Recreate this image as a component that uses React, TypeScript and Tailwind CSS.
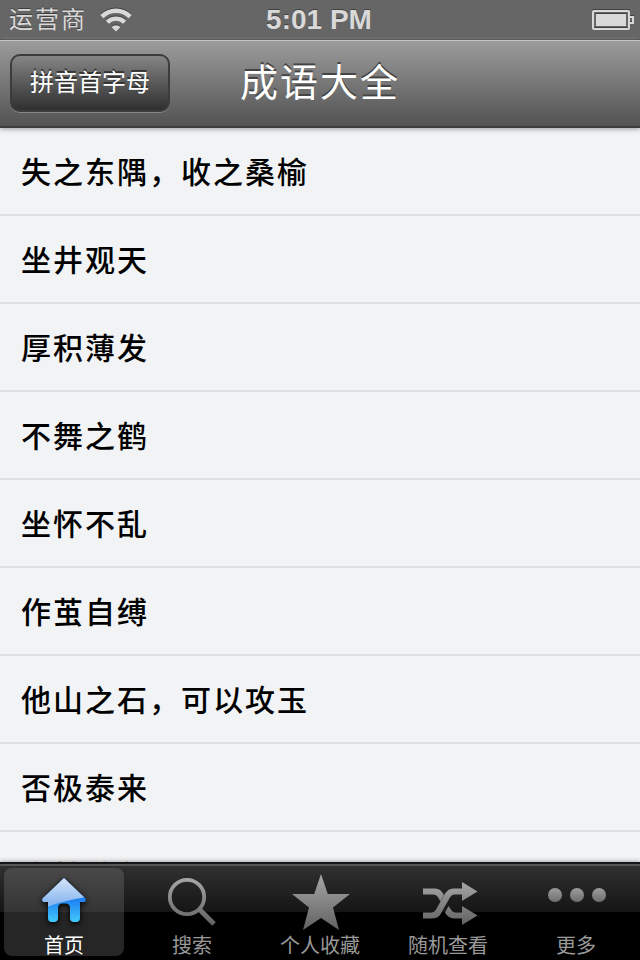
import type { ReactNode } from 'react';

const idioms = [
  '失之东隅，收之桑榆',
  '坐井观天',
  '厚积薄发',
  '不舞之鹤',
  '坐怀不乱',
  '作茧自缚',
  '他山之石，可以攻玉',
  '否极泰来',
  '守株待兔',
];

function WifiIcon() {
  return (
    <svg width="32" height="24" viewBox="0 0 32 24" fill="none" stroke="#d9d9d9" className="drop-shadow-[0_-1px_0_#404040]">
      <path d="M1.8 8.6 A20 20 0 0 1 30.2 8.6" strokeWidth="4.6" />
      <path d="M7.4 14.2 A12.2 12.2 0 0 1 24.600 14.2" strokeWidth="4.4" />
      <path d="M16 23.5 L11.5 19 A6.5 6.5 0 0 1 20.5 19 Z" fill="#d9d9d9" stroke="none" />
    </svg>
  );
}

function BatteryIcon() {
  return (
    <svg width="42" height="21" viewBox="0 0 42 21" fill="none" className="drop-shadow-[0_-1px_0_#404040]">
      <rect x="1" y="1" width="36" height="18" rx="1" stroke="#d9d9d9" strokeWidth="2" />
      <rect x="4" y="4" width="30" height="12" fill="#d9d9d9" />
      <path d="M38 7h3v6h-3" stroke="#d9d9d9" strokeWidth="2" />
    </svg>
  );
}

function GrayGradient({ id, y1, y2 }: { id: string; y1: number; y2: number }) {
  return (
    <linearGradient id={id} gradientUnits="userSpaceOnUse" x1="0" x2="0" y1={y1} y2={y2}>
      <stop offset="0" stopColor="#a6a6a6" />
      <stop offset="1" stopColor="#626262" />
    </linearGradient>
  );
}

function HomeIcon() {
  return (
    <svg width="120" height="68" viewBox="0 0 120 68" className="drop-shadow-[0_2px_3px_#000]">
      <defs>
        <linearGradient id="home" x1="0" x2="0" y1="0" y2="1">
          <stop offset="0" stopColor="#1468ee" />
          <stop offset="0.5" stopColor="#1f82f2" />
          <stop offset="1" stopColor="#45d0fc" />
        </linearGradient>
        <linearGradient id="homeShine" x1="0" x2="0" y1="0" y2="1">
          <stop offset="0" stopColor="#dce8fa" />
          <stop offset="1" stopColor="#7fb0ee" />
        </linearGradient>
        <clipPath id="homeShape">
          <path d="M60 10 L81.5 30.5 Q82.5 34 79 34 H76 V50 Q76 54 72 54 H70 Q66 54 66 50 V39 Q65 35.5 62 35.5 H58 Q55 35.5 54 39 V50 Q54 54 50 54 H48 Q44 54 44 50 V34 H41 Q37.5 34 38.5 30.5 Z" />
        </clipPath>
      </defs>
      <g clipPath="url(#homeShape)">
        <rect x="36" y="8" width="50" height="48" fill="url(#home)" />
        <path d="M36 8 H86 V28.5 Q62 32 43 39 H36 Z" fill="url(#homeShine)" />
      </g>
    </svg>
  );
}

function SearchIcon() {
  return (
    <svg width="120" height="68" viewBox="0 0 120 68" fill="none" stroke="url(#search)">
      <defs>
        <GrayGradient id="search" y1={10} y2={57} />
      </defs>
      <circle cx="55" cy="29" r="17.2" strokeWidth="3.8" />
      <path d="M67.5 41.500 L82 56" strokeWidth="5" />
    </svg>
  );
}

function StarIcon() {
  return (
    <svg width="120" height="68" viewBox="0 0 120 68" fill="url(#star)">
      <defs>
        <GrayGradient id="star" y1={6} y2={62} />
      </defs>
      <path d="M61 6 L67.8 26 H90 L73 39.5 L79 62 L61 50 L43 62 L49 39.5 L32 26 H54.2 Z" />
    </svg>
  );
}

function ShuffleIcon() {
  return (
    <svg width="120" height="68" viewBox="0 0 120 68" fill="none" stroke="url(#shuffle)">
      <defs>
        <GrayGradient id="shuffle" y1={14} y2={57} />
      </defs>
      <path d="M35 20.500 H46 C51 20.500 53.500 22.500 56 27 L52.500 33.500 L49.500 28.500 Q48 26.500 45 26.500 H35 Z" fill="url(#shuffle)" stroke="none" />
      <path d="M60.500 38 L64 43 Q66 44.500 68 44.500 H75 V50.500 H67 Q60 50.500 57 44.500 Z" fill="url(#shuffle)" stroke="none" />
      <path d="M35 47.500 H43.500 Q48.500 47.500 50.500 43.500 L59.500 27.500 Q62 23.500 66 23.500 H75" strokeWidth="6.200" />
      <path d="M74 14 L89.5 23.500 L74 33 Z M74 38 L89.5 47.500 L74 57 Z" fill="url(#shuffle)" stroke="none" />
    </svg>
  );
}

function MoreIcon() {
  return (
    <svg width="120" height="68" viewBox="0 0 120 68" fill="url(#more)">
      <defs>
        <GrayGradient id="more" y1={17} y2={38} />
      </defs>
      <circle cx="39" cy="27" r="7" />
      <circle cx="61" cy="27" r="7" />
      <circle cx="83" cy="27" r="7" />
    </svg>
  );
}

const tabs: { label: string; icon: ReactNode }[] = [
  { label: '首页', icon: <HomeIcon /> },
  { label: '搜索', icon: <SearchIcon /> },
  { label: '个人收藏', icon: <StarIcon /> },
  { label: '随机查看', icon: <ShuffleIcon /> },
  { label: '更多', icon: <MoreIcon /> },
];

export default function App() {
  return (
    <div className="flex h-[960px] w-[640px] flex-col overflow-hidden bg-[#f1f3f5] font-['Liberation_Sans','Noto_Sans_CJK_SC',sans-serif]">
      {/* Status bar */}
      <div className="grid h-10 shrink-0 grid-cols-3 items-center border-b border-[#444] bg-[#666] text-[#d9d9d9]">
        <div className="flex items-center gap-[13px] pl-[9px]">
          <span className="text-[24px] leading-10 tracking-[2px] [text-shadow:0_-1px_0_#404040]">运营商</span>
          <WifiIcon />
        </div>
        <span className="pr-0.5 text-center text-[28px] leading-[38px] font-bold [text-shadow:0_-1px_0_#404040]">5:01 PM</span>
        <div className="flex justify-end pr-[6px]">
          <BatteryIcon />
        </div>
      </div>

      {/* Navigation bar */}
      <header className="z-10 grid h-[88px] shrink-0 grid-cols-[160px_300px] items-center border-t border-b-2 border-t-[#c2c2c2] border-b-[#3d3d3d] bg-linear-to-b from-[#9c9c9c] to-[#535353] pb-0.5 pl-[10px] shadow-[0_1px_5px_#999]">
        <button className="h-[58px] w-40 rounded-[10px] border-2 border-[#3c3c3c] bg-linear-to-b from-[#868686] to-[#303030] text-[24px] leading-[54px] text-white shadow-[0_1px_0_#888] [text-shadow:0_-2px_0_#333]">
          拼音首字母
        </button>
        <h1 className="text-center text-[38px] leading-[80px] tracking-[2px] text-white [text-shadow:0_-2px_0_#444]">成语大全</h1>
      </header>

      {/* Idiom list */}
      <ul className="min-h-0 flex-1 overflow-hidden">
        {idioms.map((idiom) => (
          <li key={idiom} className="h-[88px] border-b-2 border-[#dfe0e2] pt-0.5 pl-[21px] text-[30px] leading-[86px] font-medium tracking-[2px] text-black">
            {idiom}
          </li>
        ))}
      </ul>

      {/* Tab bar */}
      <nav className="z-10 flex h-[98px] shrink-0 gap-2 border-t-2 border-[#161616] bg-[linear-gradient(#565656_0px,#565656_2px,#303030_2px,#151515_48px,#000_48px)] px-1 pt-1 shadow-[0_-1px_4px_#aaa]">
        {tabs.map((tab, i) => (
          <button
            key={tab.label}
            className={`flex h-[88px] w-[120px] flex-col items-center rounded-lg ${
              i === 0 ? 'bg-[linear-gradient(#494949_0px,#343434_44px,#262626_44px)] text-white' : 'text-[#999]'
            }`}
          >
            {tab.icon}
            <span className="text-[20px] leading-[20px] whitespace-nowrap">{tab.label}</span>
          </button>
        ))}
      </nav>
    </div>
  );
}
